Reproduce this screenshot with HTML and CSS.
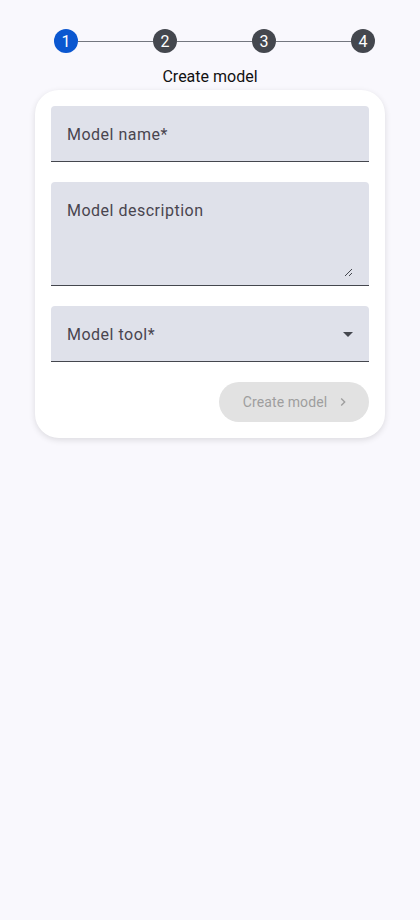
FILE: index.html
```html
<!DOCTYPE html>
<html>
<head>
<meta charset="utf-8">
<link rel="stylesheet" href="styles.css">
</head>
<body>
<div class="page">
  <div class="stepper">
    <div class="step active">1</div>
    <div class="line"></div>
    <div class="step">2</div>
    <div class="line"></div>
    <div class="step">3</div>
    <div class="line"></div>
    <div class="step">4</div>
  </div>
  <div class="step-label">Create model</div>
  <div class="card">
    <div class="field">
      <span class="label">Model name*</span>
    </div>
    <div class="field area">
      <span class="label">Model description</span>
      <svg class="grip" width="9" height="9" viewBox="0 0 9 9"><path d="M8 1 L1 8 M8 5 L5 8" stroke="#44474e" stroke-width="1" fill="none"/></svg>
    </div>
    <div class="field select">
      <span class="label">Model tool*</span>
      <span class="arrow"></span>
    </div>
    <div class="actions">
      <button class="btn">Create model <svg width="16" height="16" viewBox="0 0 24 24"><path d="M10 6 8.59 7.41 13.17 12l-4.58 4.59L10 18l6-6z" fill="#9e9e9e"/></svg></button>
    </div>
  </div>
</div>
</body>
</html>
```
FILE: styles.css
```css
html, body {
  margin: 0;
  padding: 0;
  background: #f9f8fd;
  font-family: Roboto, "Liberation Sans", sans-serif;
}
.page {
  width: 420px;
  min-height: 920px;
  padding-top: 29px;
  box-sizing: border-box;
}
.stepper {
  display: flex;
  align-items: center;
  margin: 0 45px 0 54px;
}
.step {
  width: 24px;
  height: 24px;
  border-radius: 50%;
  background: #44474e;
  color: #fff;
  font-size: 16px;
  display: flex;
  align-items: center;
  justify-content: center;
  flex: none;
}
.step.active {
  background: #0b57d0;
}
.line {
  flex: 1;
  height: 1px;
  background: #74777f;
}
.step-label {
  text-align: center;
  font-size: 16px;
  color: #111;
  line-height: 20px;
  margin-top: 14px;
}
.card {
  margin: 3px 35px 0;
  background: #fff;
  border-radius: 24px;
  padding: 16px;
  box-shadow: 0 2px 6px rgba(0,0,0,0.12);
  display: flex;
  flex-direction: column;
  gap: 20px;
}
.field {
  position: relative;
  height: 55px;
  background: #dfe1ea;
  border-radius: 4px 4px 0 0;
  border-bottom: 1px solid #44474e;
  display: flex;
  align-items: center;
  padding: 0 16px;
  padding-top: 1px;
  box-sizing: border-box;
  height: 56px;
}
.field.area {
  align-items: flex-start;
  padding-top: 19px;
  height: 104px;
}
.label {
  font-size: 16px;
  color: #49454f;
  letter-spacing: 0.5px;
}
.grip {
  position: absolute;
  right: 16px;
  bottom: 8px;
}
.select {
  justify-content: space-between;
}
.arrow {
  width: 0;
  height: 0;
  border-left: 5px solid transparent;
  border-right: 5px solid transparent;
  border-top: 5px solid #44474e;
}
.actions {
  display: flex;
  justify-content: flex-end;
}
.btn {
  width: 150px;
  height: 40px;
  border: none;
  border-radius: 20px;
  background: #e2e2e2;
  color: #9e9e9e;
  font-family: Roboto, "Liberation Sans", sans-serif;
  font-size: 14px;
  letter-spacing: 0.1px;
  display: flex;
  align-items: center;
  justify-content: center;
  gap: 8px;
  padding: 0 0 0 6px;
}
```
